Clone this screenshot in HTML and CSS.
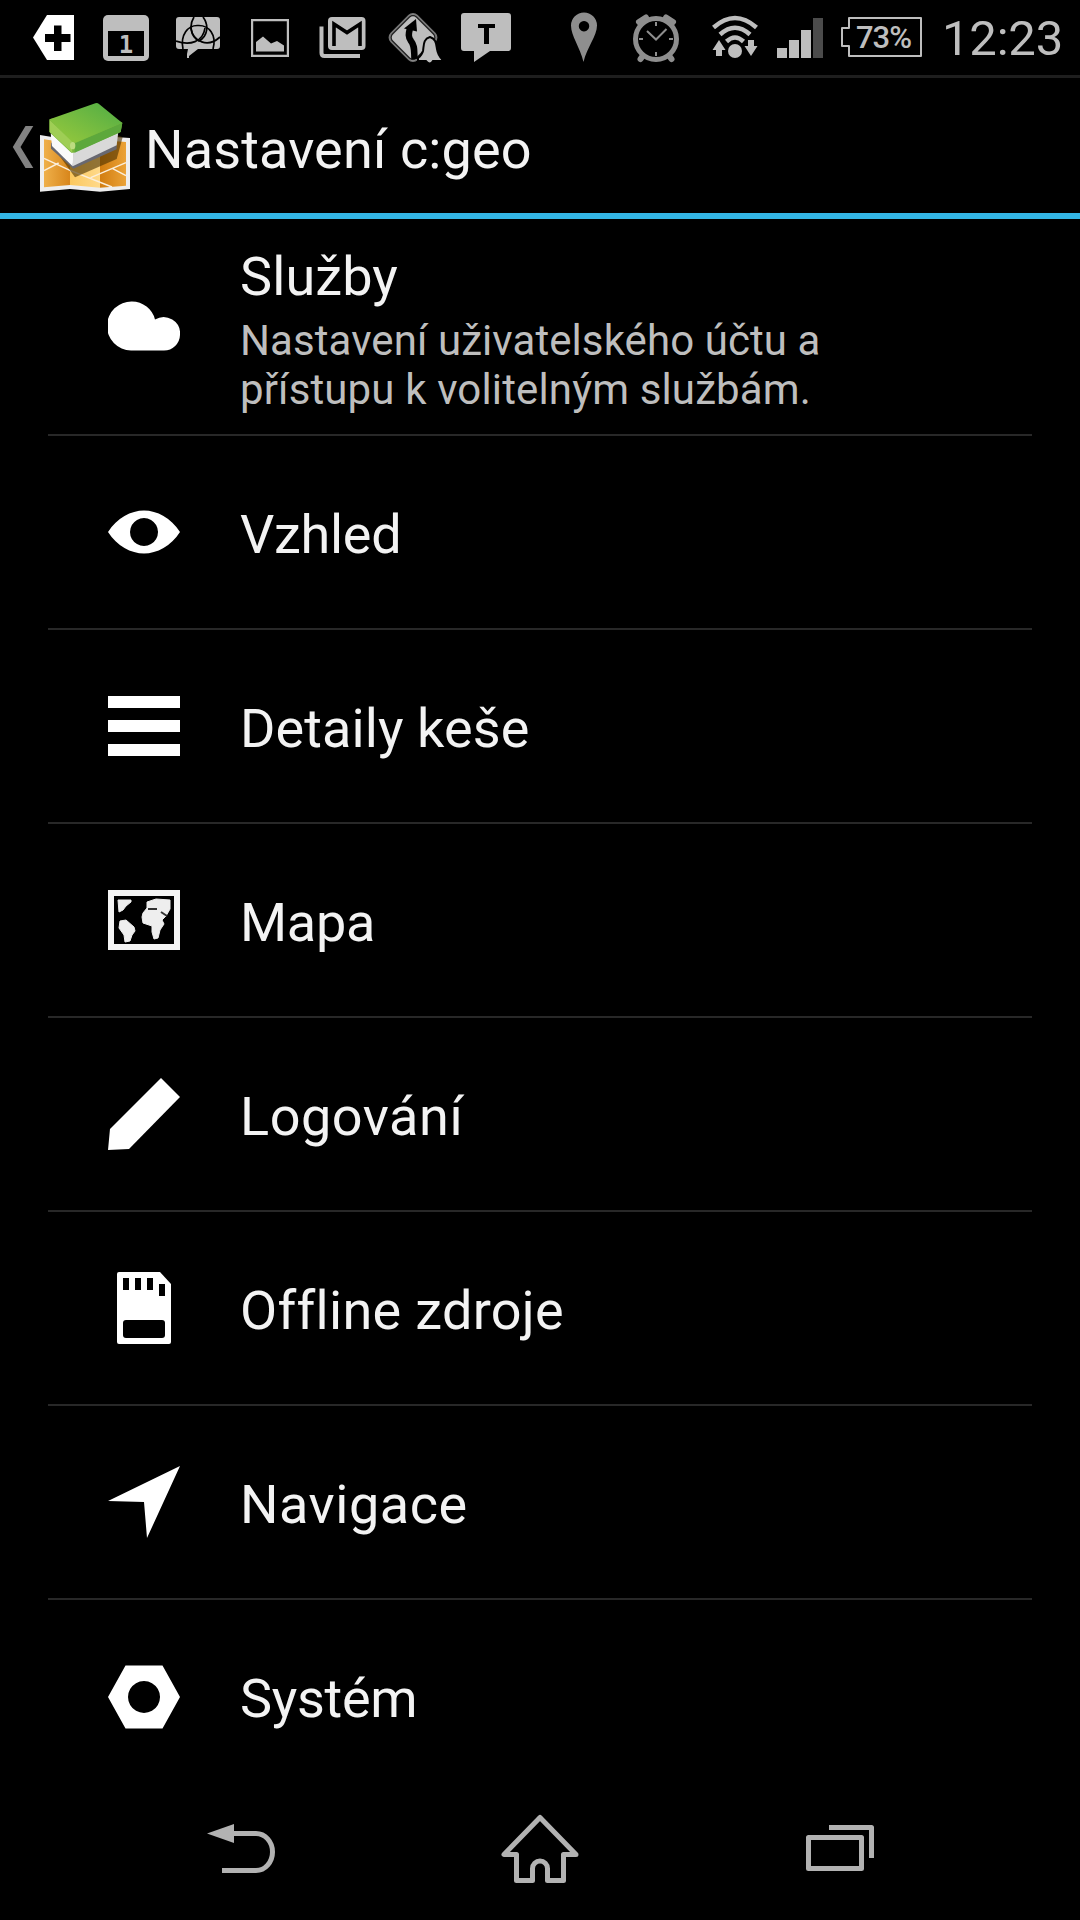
FILE: index.html
```html
<!DOCTYPE html>
<html lang="cs">
<head>
<meta charset="utf-8">
<title>Nastavení c:geo</title>
<link rel="stylesheet" href="styles.css">
</head>
<body>
<div class="screen">
  <header class="status">
    <svg width="88" height="75" viewBox="0 0 88 75"><path fill="#fff" d="M47 15H74V60H47L33 37.5Z"/><path fill="#000" d="M54 25.500h7.500v8.500h9v8h-9v9H54v-9h-9v-8h9z"/></svg>
    <svg width="74" height="75" viewBox="88 0 74 75"><rect x="103" y="15" width="46" height="46" rx="5" fill="#bebebe"/><path d="M108 31h36v25h-36z"/><text x="126" y="52.500" class="cal" text-anchor="middle">1</text></svg>
    <svg width="74" height="75" viewBox="162 0 74 75"><clipPath id="bubble"><path d="M179 17H217a3 3 0 0 1 3 3V46a3 3 0 0 1-3 3H198L189 56V58H187V54L188 49H179a3 3 0 0 1-3-3V20a3 3 0 0 1 3-3Z"/></clipPath><path fill="#bebebe" d="M179 17H217a3 3 0 0 1 3 3V46a3 3 0 0 1-3 3H198L189 56V58H187V54L188 49H179a3 3 0 0 1-3-3V20a3 3 0 0 1 3-3Z"/><g clip-path="url(#bubble)" fill="none" stroke="#000" stroke-width="1.700"><path d="M194 17C189 25 190 36 199 41C208 36 209 25 203 17"/><path d="M183 49C180 35 188 25 198 25.500C209 25 217 35 213 49"/><path d="M176 41C190 46 203 42 205 28M220 37C208 48 193 42 191 28"/></g></svg>
    <svg width="68" height="75" viewBox="236 0 68 75"><path fill="none" stroke="#bebebe" stroke-width="2.200" d="M252.100 20.100h35.800v35.800h-35.800z"/><path fill="#bebebe" d="M256 51.500V42L263 36.500L271 43.500L277 41L284 45.500V51.500Z"/></svg>
    <svg width="72" height="75" viewBox="304 0 72 75"><rect x="328" y="17" width="37.500" height="33" rx="4" fill="#bebebe"/><path fill="none" stroke="#000" stroke-width="3.600" d="M334 46V24L347 32.500L360 24V46"/><path fill="none" stroke="#bebebe" stroke-width="4" d="M321.500 26.500V53q0 3 3 3H360"/></svg>
    <svg width="74" height="75" viewBox="376 0 74 75"><rect x="394.500" y="19" width="37" height="37" rx="6" transform="rotate(45 413 37.500)" fill="#bebebe" stroke="#777" stroke-width="1.500"/><rect x="396" y="20.500" width="34" height="34" rx="5" transform="rotate(45 413 37.500)" fill="none" stroke="#222" stroke-width="1.500"/><path fill="none" stroke="#000" stroke-width="6.500" d="M410 28C408.500 34 408 37 411 41C415 46 414 51 414.500 59"/><path d="M404 28.500L416 19L417 31.500Z"/><path fill="#bebebe" stroke="#000" stroke-width="2" d="M430 37C423 39 424 45 423 51Q422 55 418 58V61H426Q430 66 433 61H442V59Q438 55 437 49C436 43 436 39 430 37Z"/></svg>
    <svg width="90" height="75" viewBox="450 0 90 75"><path fill="#bebebe" d="M464 13H508q3 0 3 3V48q0 3-3 3H490L474 62V51H464q-3 0-3-3V16q0-3 3-3Z"/><path d="M478 24h17v4h-6v16h-5V28h-6z"/></svg>
    <svg width="76" height="75" viewBox="540 0 76 75"><path fill="#8e8e8e" fill-rule="evenodd" d="M583.500 62C580 47 571 36 571 25.500a12.800 12.800 0 0 1 26 0C597 36 587 47 583.500 62ZM584 21a5.200 5.200 0 1 0 .01 0Z"/></svg>
    <svg width="80" height="75" viewBox="616 0 80 75"><g fill="none" stroke="#8e8e8e"><circle cx="656" cy="39" r="20.500" stroke-width="5"/><path stroke-width="2" d="M656 22v4M656 52v4M639 39h4M669 39h4M647 31l9 8.500L666.500 29"/><path stroke-width="6" stroke-linecap="round" d="M639 22L646 17.500M673 22L666 17.500M642 57l-1.500 2M670 57l1.500 2"/></g></svg>
    <svg width="72" height="75" viewBox="696 0 72 75"><g fill="none" stroke="#bebebe" stroke-width="4.500"><path d="M713.500 27.500Q735 8.500 756.500 27.500M720 34.500Q735 21 750 34.500M726.500 41.500Q735 33.500 743.500 41.500"/></g><circle cx="735" cy="51" r="7" fill="#bebebe"/><path fill="#bebebe" d="M719 40l6.500 10H722v6h-6v-6h-3.500zM751 56l-6.500-10H748v-6h6v6h3.500z"/></svg>
    <svg width="64" height="75" viewBox="768 0 64 75"><path fill="#bebebe" d="M777 48h10v10h-10zM789 40h10v18h-10zM801 30h10v28h-10z"/><path fill="#4b4b4b" d="M813 18h10v40h-10z"/></svg>
    <svg width="100" height="75" viewBox="832 0 100 75"><path fill="none" stroke="#bebebe" stroke-width="2" stroke-linejoin="round" d="M849 18H921V56H849V46H842V28H849Z"/><text x="856" y="48" class="pct" textLength="56">73%</text></svg>
    <span class="clock">12:23</span>
  </header>

  <div class="actionbar">
    <svg width="140" height="135" viewBox="0 78 140 135">
      <defs>
        <linearGradient id="lid" x1="0" y1="1" x2="1" y2="0"><stop offset="0" stop-color="#9aca3c"/><stop offset="1" stop-color="#4fac45"/></linearGradient>
        <linearGradient id="fold1"><stop offset="0" stop-color="#efb04a"/><stop offset="1" stop-color="#d8861b"/></linearGradient>
        <linearGradient id="fold2"><stop offset="0" stop-color="#fbc85e"/><stop offset="1" stop-color="#ffd98a"/></linearGradient>
        <linearGradient id="fold3"><stop offset="0" stop-color="#d27d10"/><stop offset="1" stop-color="#eba338"/></linearGradient>
      </defs>
      <path fill="#828282" d="M33.300 126H25.500L12.800 147L25.500 168H33.300L20.500 147Z"/>
      <g transform="translate(0 90) scale(.33333)">
        <path fill="#eee" d="M120 135L210 150L300 138L390 144V297L300 305L210 297L120 305Z"/>
        <path fill="url(#fold1)" d="M132 148L210 160V285L132 292Z"/>
        <path fill="url(#fold2)" d="M210 160L300 150V293L210 285Z"/>
        <path fill="url(#fold3)" d="M300 150L378 156V287L300 293Z"/>
        <path fill="none" stroke="#fbeeda" stroke-width="4.500" d="M132 205L210 241L336 291M132 242L176 219M272 263L378 218M338 236L378 257"/>
        <path fill="#4a3000" fill-opacity=".6" d="M155 165L225 262L350 207L368 142L340 130Z"/>
        <path fill="#686870" d="M153 158V176L220 236L350 178V158Z"/>
        <path fill="#fafafa" d="M152 130L156 168L218 229L222 180Z"/>
        <path fill="#d9d9d9" d="M220 180L218 229L350 166L355 125Z"/>
        <path fill="#78b53c" d="M148 88V126L214 188Q222 190 230 184L362 126L367 98L290 60Z"/>
        <path fill="#5da83c" d="M225 160L367 98L362 126L224 188Z"/>
        <path fill="url(#lid)" d="M149 88L286 40Q292 38 297 42L366 98L226 158Q220 159 215 155Z"/>
        <path fill="#9fce55" d="M149 90L215 154L217 188L149 126Z"/>
        <ellipse cx="218" cy="167" rx="8" ry="11" fill="#bddc80"/>
      </g>
    </svg>
    <h1 class="bar-title">Nastavení c:geo</h1>
  </div>

  <main class="list">
    <div class="row first">
      <svg class="icon" viewBox="0 0 72 72"><path fill="#fff" d="M24 10.500A24 24 0 0 1 47 28.500A16.500 16.500 0 0 1 72 44A16 16 0 0 1 56 59.500H23A24.500 24.500 0 0 1 24 10.500Z"/></svg>
      <div><div class="label">Služby</div><div class="summary">Nastavení uživatelského účtu a<br><span class="loose">přístupu k volitelným službám.</span></div></div>
    </div>
    <div class="row">
      <svg class="icon" viewBox="0 0 72 72"><path fill="#fff" fill-rule="evenodd" d="M0 36C9 22 23 14.500 36 14.500S63 22 72 36C63 50 49 57.500 36 57.500S9 50 0 36ZM36 22a14 14 0 1 0 .01 0Z"/></svg>
      <div class="label tight">Vzhled</div>
    </div>
    <div class="row">
      <svg class="icon" viewBox="0 0 72 72"><path fill="#fff" d="M0 6h72v12H0zM0 30h72v12H0zM0 54h72v12H0z"/></svg>
      <div class="label">Detaily keše</div>
    </div>
    <div class="row">
      <svg class="icon" viewBox="0 0 72 72"><path fill="none" stroke="#f4f4f4" stroke-width="6" d="M3 9h66v54H3z"/><path fill="#eee" stroke="#eee" stroke-linejoin="round" d="M10 16H23V18L18 22L15 26L11 28ZM12 37L18 36L26 43L27 47L24 51L22 57L17 58L16 51L11 44ZM39 18L48 15L62 16V25L58 32L54 36L56 40L52 46L50 54L46 55L44 48V42L35 39L34 33L35 29L39 24Z"/><path stroke="#333" stroke-width="2" d="M40 25h9M53 28l6 4"/></svg>
      <div class="label tight">Mapa</div>
    </div>
    <div class="row">
      <svg class="icon" viewBox="0 0 72 72"><path fill="#fff" d="M53 0L72 19L21 71L0 72L2 51Z"/></svg>
      <div class="label wide">Logování</div>
    </div>
    <div class="row">
      <svg class="icon" viewBox="0 0 72 72"><path fill="#fff" d="M11 0H52L63 12V70q0 2-2 2H11q-2 0-2-2V2q0-2 2-2Z"/><path d="M15 6h6v12h-6zM27 6h6v12h-6zM39 6h6v12h-6zM51 12h6v12h-6z"/><rect x="15" y="48" width="42" height="18" rx="3"/></svg>
      <div class="label medium">Offline zdroje</div>
    </div>
    <div class="row">
      <svg class="icon" viewBox="0 0 72 72"><path fill="#fff" d="M72 0L39 72L36 36L0 35Z"/></svg>
      <div class="label wide">Navigace</div>
    </div>
    <div class="row last">
      <svg class="icon" viewBox="0 0 72 72"><path fill="#fff" fill-rule="evenodd" d="M17.500 5.500h37L72 37L54.500 68.500h-37L0 37ZM36 21a16 16 0 1 0 .01 0Z"/></svg>
      <div class="label tight">Systém</div>
    </div>
  </main>

  <nav class="navbar">
    <svg width="360" height="130" viewBox="60 1790 360 130"><path fill="none" stroke="#b2b2b2" stroke-width="5" d="M232 1833.500H256A16.500 18.500 0 0 1 256 1870.500H222"/><path fill="#b2b2b2" d="M207 1833.500L234 1824V1843Z"/></svg>
    <svg width="240" height="130" viewBox="420 1790 240 130"><path fill="none" stroke="#b2b2b2" stroke-width="5" stroke-linejoin="round" d="M540 1817.500L504 1854.500H516.500V1880.500H532.500V1868.500a7.500 7.500 0 0 1 15 0V1880.500H563.500V1854.500H576Z"/></svg>
    <svg width="360" height="130" viewBox="660 1790 360 130"><g fill="none" stroke="#b2b2b2" stroke-width="5" stroke-linejoin="round"><path d="M808.500 1837.500h53v31h-53z"/><path d="M829 1827.500H871.500V1858"/></g></svg>
  </nav>
</div>
</body>
</html>
```
FILE: styles.css
```css
* { box-sizing: border-box; }
body { margin: 0; background: #000; font-family: Roboto, "Noto Sans", sans-serif; font-variant-ligatures: none; }
svg { display: block; flex: none; }
.screen { width: 1080px; height: 1920px; display: flex; flex-direction: column; overflow: hidden; background: #000; }
.status { flex: none; height: 78px; display: flex; border-bottom: 3px solid #1e1e1e; }
.cal { font: bold 24px "DejaVu Sans Mono", monospace; fill: #bebebe; }
.pct { font: 500 31px Roboto, sans-serif; fill: #bebebe; }
.clock { padding-left: 10px; font-size: 49px; line-height: 78px; letter-spacing: -0.2px; color: #bebebe; white-space: nowrap; }
.actionbar { flex: none; height: 141px; display: flex; border-bottom: 6px solid #33b5e5; }
.bar-title { margin: 0; padding-left: 5px; font-size: 54px; font-weight: 400; line-height: 143px; letter-spacing: 0.15px; color: #f3f3f3; white-space: nowrap; }
.list { flex: none; height: 1571px; padding: 0 48px; }
.row { height: 194px; display: flex; align-items: center; gap: 60px; padding-left: 60px; border-bottom: 2px solid #282828; }
.row.first { height: 217px; }
.row.last { border-bottom: 0; height: 192px; }
.icon { width: 72px; height: 72px; }
.label { padding-top: 4px; font-size: 54px; line-height: 63px; letter-spacing: 0.1px; color: #f3f3f3; white-space: nowrap; }
.label.tight { letter-spacing: -0.3px; }
.label.medium { letter-spacing: 0.3px; }
.label.wide { letter-spacing: 0.55px; }
.first .label { padding-top: 1px; }
.summary { padding: 8px 0 0; margin-bottom: -5px; font-size: 42px; line-height: 49px; letter-spacing: 0.08px; color: #bebebe; white-space: nowrap; }
.loose { letter-spacing: 0.14px; }
.navbar { flex: none; height: 130px; display: flex; justify-content: center; }
```
